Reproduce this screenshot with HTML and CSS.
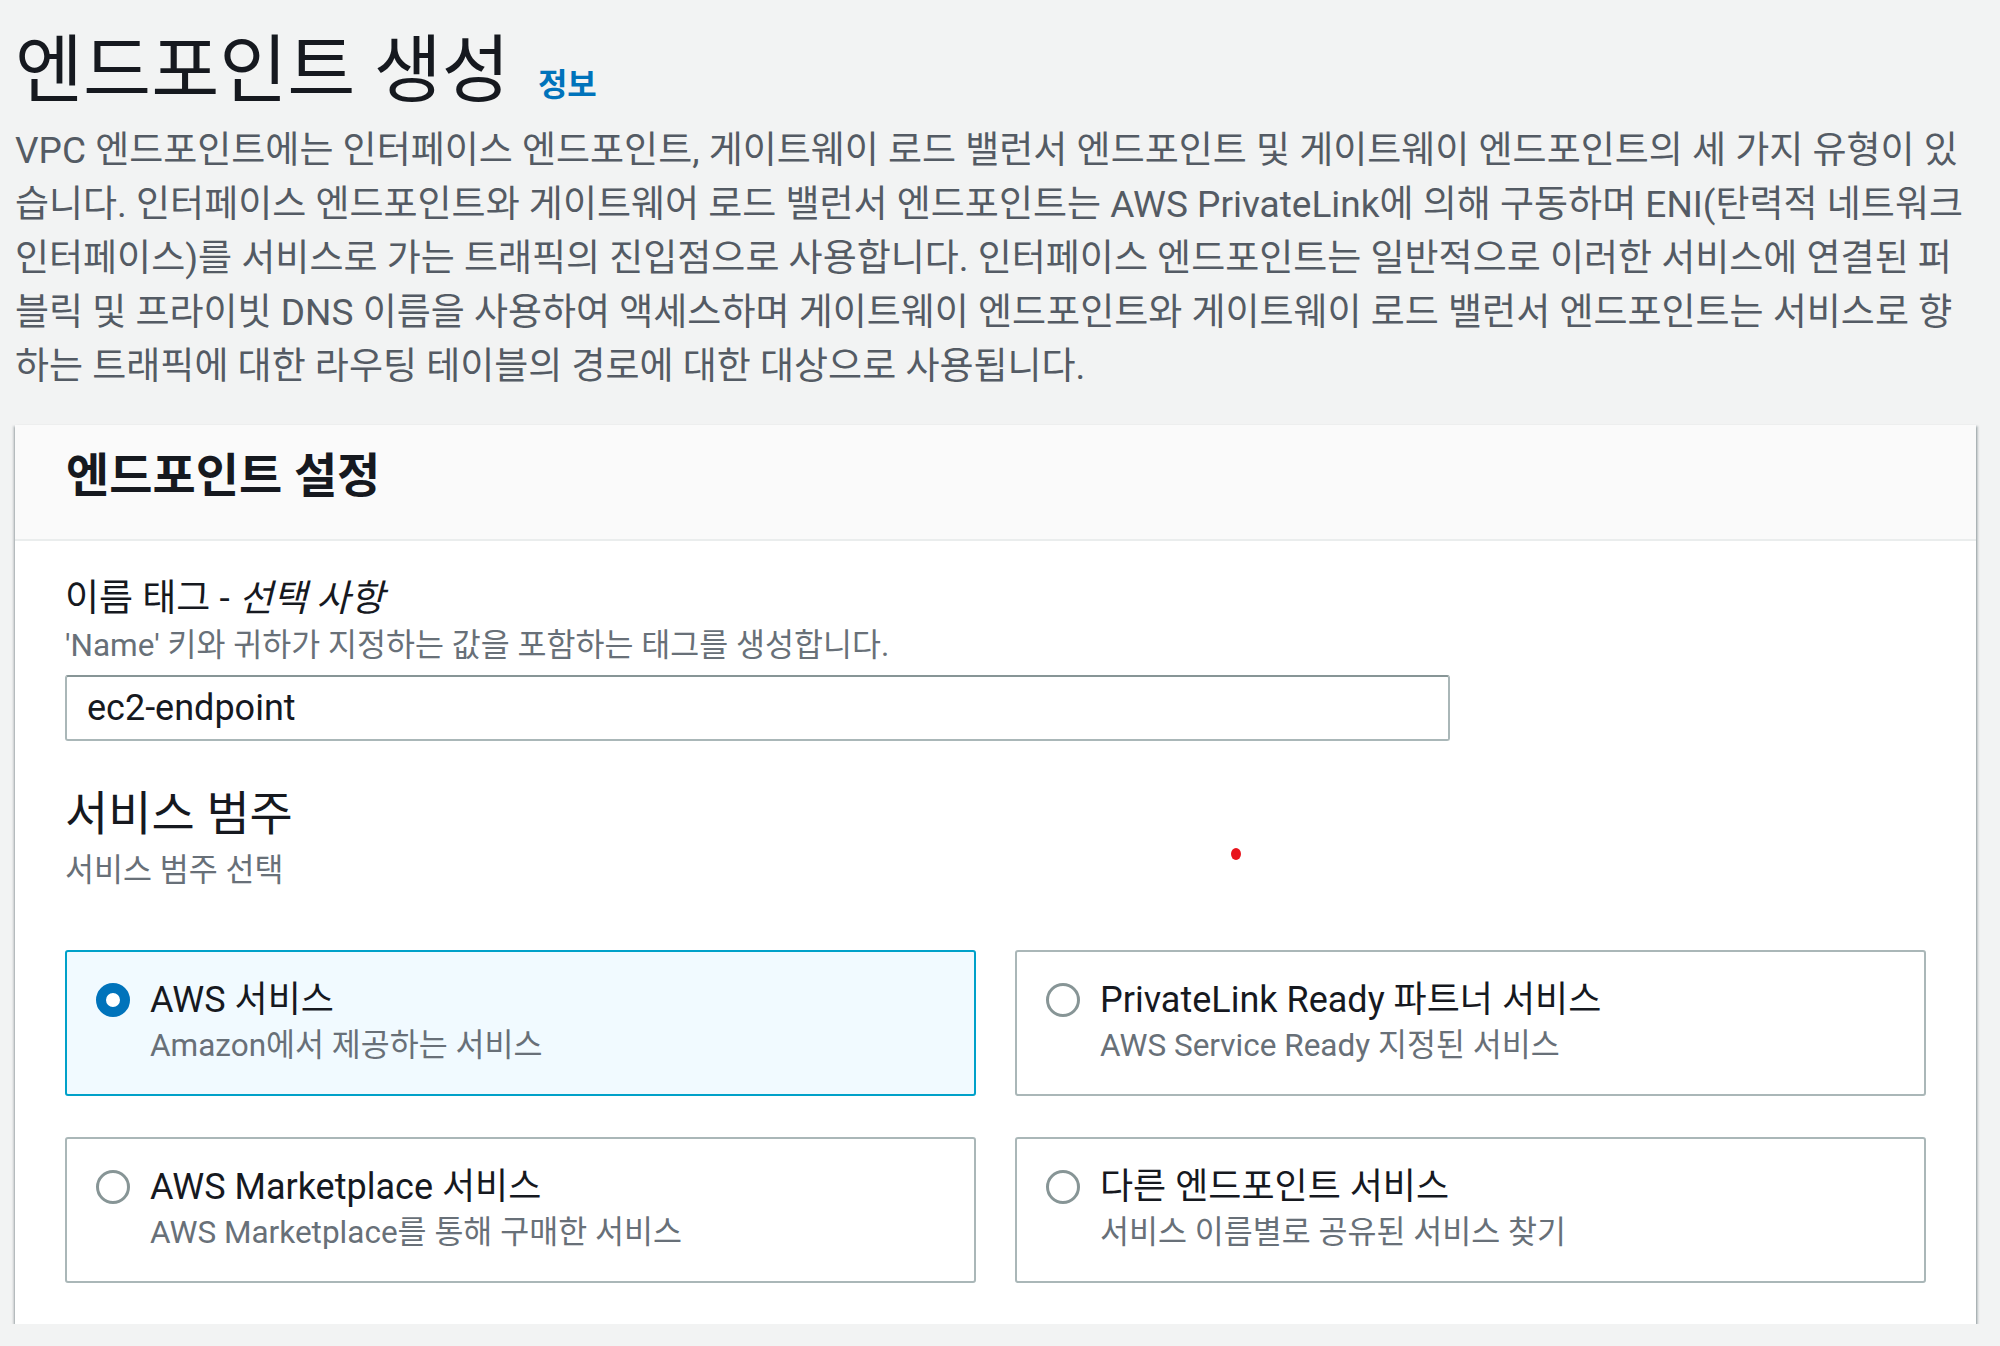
FILE: index.html
```html
<!DOCTYPE html>
<html lang="ko">
<head>
<meta charset="utf-8">
<title>엔드포인트 생성</title>
<link rel="stylesheet" href="styles.css">
</head>
<body>
<main class="page">
  <header class="page-head">
    <h1 class="page-title">엔드포인트 생성</h1>
    <a class="info-link" href="#">정보</a>
  </header>
  <p class="page-desc">VPC 엔드포인트에는 인터페이스 엔드포인트, 게이트웨이 로드 밸런서 엔드포인트 및 게이트웨이 엔드포인트의 세 가지 유형이 있<br>습니다. 인터페이스 엔드포인트와 게이트웨어 로드 밸런서 엔드포인트는 AWS PrivateLink에 의해 구동하며 ENI(탄력적 네트워크<br>인터페이스)를 서비스로 가는 트래픽의 진입점으로 사용합니다. 인터페이스 엔드포인트는 일반적으로 이러한 서비스에 연결된 퍼<br>블릭 및 프라이빗 DNS 이름을 사용하여 액세스하며 게이트웨이 엔드포인트와 게이트웨이 로드 밸런서 엔드포인트는 서비스로 향<br>하는 트래픽에 대한 라우팅 테이블의 경로에 대한 대상으로 사용됩니다.</p>

  <section class="card">
    <div class="card-head">
      <h2 class="card-title">엔드포인트 설정</h2>
    </div>
    <div class="card-body">
      <div class="field">
        <label class="field-label" for="nametag">이름 태그 - <i class="optional">선택 사항</i></label>
        <div class="field-desc">'Name' 키와 귀하가 지정하는 값을 포함하는 태그를 생성합니다.</div>
        <input class="text-input" id="nametag" type="text" value="ec2-endpoint">
      </div>

      <div class="group">
        <h3 class="group-title">서비스 범주</h3>
        <div class="group-desc">서비스 범주 선택</div>
        <span class="cursor-dot"></span>
      </div>

      <div class="tiles">
        <label class="tile selected">
          <span class="radio checked"></span>
          <span class="tile-text">
            <span class="tile-title">AWS 서비스</span>
            <span class="tile-desc">Amazon에서 제공하는 서비스</span>
          </span>
        </label>
        <label class="tile">
          <span class="radio"></span>
          <span class="tile-text">
            <span class="tile-title">PrivateLink Ready 파트너 서비스</span>
            <span class="tile-desc">AWS Service Ready 지정된 서비스</span>
          </span>
        </label>
        <label class="tile">
          <span class="radio"></span>
          <span class="tile-text">
            <span class="tile-title">AWS Marketplace 서비스</span>
            <span class="tile-desc">AWS Marketplace를 통해 구매한 서비스</span>
          </span>
        </label>
        <label class="tile">
          <span class="radio"></span>
          <span class="tile-text">
            <span class="tile-title">다른 엔드포인트 서비스</span>
            <span class="tile-desc">서비스 이름별로 공유된 서비스 찾기</span>
          </span>
        </label>
      </div>
    </div>
  </section>
</main>
</body>
</html>
```

FILE: styles.css
```css
* { box-sizing: border-box; }

html, body {
  margin: 0;
  padding: 0;
  background: #f2f3f3;
  overflow: hidden;
}

body {
  font-family: "Roboto", "Noto Sans CJK KR", sans-serif;
  color: #16191f;
}

.page {
  padding: 31px 24px 0 15px;
}

.page-head {
  display: flex;
  align-items: baseline;
  gap: 28px;
}

.page-title {
  margin: 0;
  font-size: 74px;
  line-height: 80px;
  font-weight: 400;
  color: #16191f;
}

.info-link {
  font-size: 32px;
  font-weight: 700;
  color: #0073bb;
  text-decoration: none;
}

.page-desc {
  margin: 13px 0 0;
  font-size: 37px;
  line-height: 54px;
  color: #545b64;
  white-space: nowrap;
}

.card {
  margin-top: 31px;
  background: #fff;
  box-shadow: 0 2px 2px 0 rgba(0, 28, 36, 0.4), 2px 1px 2px 0 rgba(0, 28, 36, 0.2), -2px 1px 2px 0 rgba(0, 28, 36, 0.15);
}

.card-head {
  background: #fafafa;
  border-bottom: 2px solid #eaeded;
  padding: 23px 50px 35px 51px;
}

.card-title {
  margin: 0;
  font-size: 47px;
  line-height: 56px;
  font-weight: 700;
}

.card-body {
  padding: 34px 50px 41px 50px;
}

.field-label {
  display: block;
  font-size: 37px;
  line-height: 48px;
}

.optional {
  font-style: italic;
}

.field-desc {
  margin-top: 3px;
  font-size: 31.5px;
  line-height: 40px;
  color: #687078;
}

.text-input {
  display: block;
  margin-top: 9px;
  width: 1385px;
  height: 66px;
  padding: 0 20px;
  border: 2px solid #aab7b8;
  border-top-color: #879596;
  border-radius: 3px;
  font-family: "Roboto", "Noto Sans CJK KR", sans-serif;
  font-size: 36px;
  color: #16191f;
  background: #fff;
}

.group {
  position: relative;
  margin-top: 45px;
}

.group-title {
  margin: 0;
  font-size: 47px;
  line-height: 56px;
  font-weight: 400;
}

.group-desc {
  margin-top: 9px;
  font-size: 31.5px;
  line-height: 40px;
  color: #687078;
}

.cursor-dot {
  position: absolute;
  left: 1166px;
  top: 62px;
  width: 10px;
  height: 12px;
  border-radius: 50%;
  background: #e8141c;
}

.tiles {
  margin-top: 59px;
  display: grid;
  grid-template-columns: 1fr 1fr;
  column-gap: 39px;
  row-gap: 41px;
}

.tile {
  display: flex;
  align-items: flex-start;
  gap: 20px;
  height: 146px;
  padding: 26px 28px 0 29px;
  border: 2px solid #aab7b8;
  border-radius: 3px;
  background: #fff;
}

.tile.selected {
  border-color: #00a1c9;
  background: #f1faff;
}

.radio {
  flex: none;
  width: 34px;
  height: 34px;
  margin-top: 5px;
  border: 3px solid #879596;
  border-radius: 50%;
  background: #fff;
}

.radio.checked {
  border: 10px solid #0073bb;
}

.tile-text {
  display: flex;
  flex-direction: column;
  gap: 4px;
}

.tile-title {
  font-size: 36px;
  line-height: 44px;
  color: #16191f;
}

.tile-desc {
  font-size: 31.5px;
  line-height: 40px;
  color: #687078;
}
```
